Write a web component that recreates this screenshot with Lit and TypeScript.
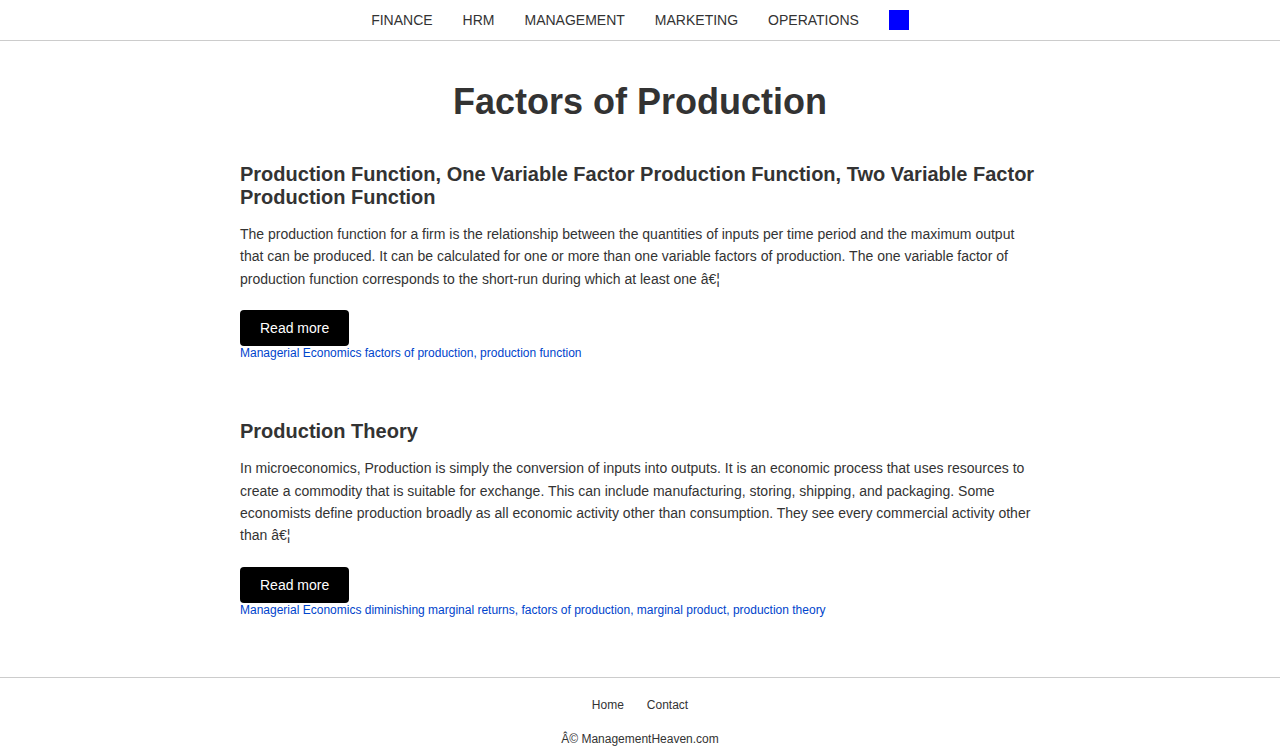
import { LitElement, html, css } from "lit";
import { customElement } from "lit/decorators.js";

interface Post {
  title: string;
  excerpt: string;
  meta: string;
}

const sections = ["FINANCE", "HRM", "MANAGEMENT", "MARKETING", "OPERATIONS"];

const posts: Post[] = [
  {
    title:
      "Production Function, One Variable Factor Production Function, Two Variable Factor Production Function",
    excerpt:
      "The production function for a firm is the relationship between the quantities of inputs per time period and the maximum output that can be produced. It can be calculated for one or more than one variable factors of production. The one variable factor of production function corresponds to the short-run during which at least one â€¦",
    meta: "Managerial Economics factors of production, production function",
  },
  {
    title: "Production Theory",
    excerpt:
      "In microeconomics, Production is simply the conversion of inputs into outputs. It is an economic process that uses resources to create a commodity that is suitable for exchange. This can include manufacturing, storing, shipping, and packaging. Some economists define production broadly as all economic activity other than consumption. They see every commercial activity other than â€¦",
    meta: "Managerial Economics diminishing marginal returns, factors of production, marginal product, production theory",
  },
];

@customElement("app-root")
export class AppRoot extends LitElement {
  static styles = css`
    :host {
      display: block;
      font-family: "Liberation Sans", Arial, sans-serif;
      font-size: 14px;
      color: #333;
      background: #fff;
    }
    a {
      color: inherit;
      text-decoration: none;
    }
    .top {
      display: flex;
      justify-content: center;
      align-items: center;
      gap: 30px;
      padding: 10px 20px;
      border-bottom: 1px solid #ccc;
      line-height: 20px;
    }
    .search {
      width: 20px;
      height: 20px;
      padding: 0;
      border: 0;
      background: #00f;
      cursor: pointer;
    }
    main {
      max-width: 800px;
      margin: 0 auto;
      padding: 40px 0 60px;
    }
    h1 {
      margin: 0 0 40px;
      font-size: 36px;
      line-height: 42px;
      text-align: center;
    }
    article + article {
      margin-top: 60px;
    }
    h2 {
      margin: 0 0 14px;
      font-size: 20px;
      line-height: 23px;
    }
    p {
      margin: 0 0 20px;
      line-height: 1.6;
    }
    .more {
      display: block;
      width: fit-content;
      padding: 10px 20px;
      border-radius: 4px;
      background: #000;
      color: #fff;
      line-height: 16px;
    }
    .meta {
      display: block;
      font-size: 12px;
      line-height: 14px;
      color: #04c;
    }
    footer {
      padding: 20px 0 0;
      border-top: 1px solid #ccc;
      font-size: 12px;
      line-height: 14px;
      text-align: center;
    }
    .links {
      display: flex;
      justify-content: center;
      gap: 23px;
      margin-bottom: 20px;
    }
  `;

  render() {
    return html`
      <nav class="top">
        ${sections.map((name) => html`<a href="#">${name}</a>`)}
        <button class="search" type="button" aria-label="Search"></button>
      </nav>
      <main>
        <h1>Factors of Production</h1>
        ${posts.map(
          (post) => html`
            <article>
              <h2>${post.title}</h2>
              <p>${post.excerpt}</p>
              <a class="more" href="#">Read more</a>
              <a class="meta" href="#">${post.meta}</a>
            </article>
          `
        )}
      </main>
      <footer>
        <div class="links"><a href="#">Home</a><a href="#">Contact</a></div>
        <div>Â© ManagementHeaven.com</div>
      </footer>
    `;
  }
}
